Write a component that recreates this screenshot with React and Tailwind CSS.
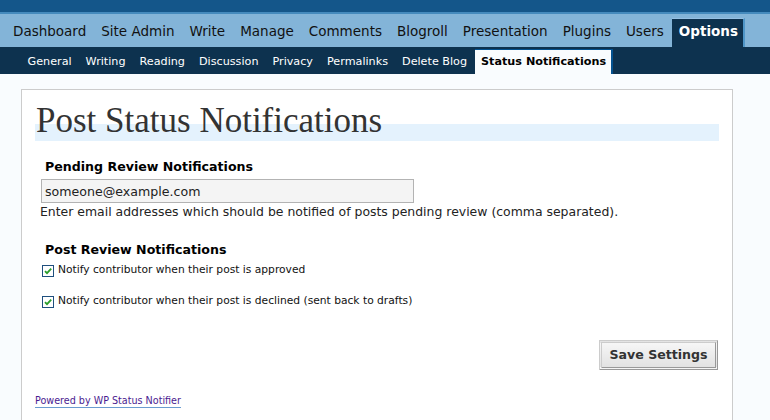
import React from 'react';

const menu = ['Dashboard', 'Site Admin', 'Write', 'Manage', 'Comments', 'Blogroll', 'Presentation', 'Plugins', 'Users', 'Options'];
const submenu = ['General', 'Writing', 'Reading', 'Discussion', 'Privacy', 'Permalinks', 'Delete Blog', 'Status Notifications'];

function Check() {
  return (
    <svg width="12" height="12" viewBox="0 0 12 12" className="shrink-0">
      <rect x="0.5" y="0.5" width="11" height="11" fill="#fff" stroke="#1f4f7e" />
      <path d="M3 6.2 L5 8.2 L9.2 3.6" fill="none" stroke="#2a9d2a" strokeWidth="1.8" />
    </svg>
  );
}

export default function App() {
  return (
    <div className="min-h-screen bg-[#f9fcfe] font-['DejaVu_Sans',sans-serif]">
      {/* Header */}
      <div className="h-3 bg-[#14568a]" />

      {/* Main menu */}
      <ul className="flex h-[35px] items-end gap-px border-t-2 border-[#448abd] bg-[#83b4d8] pl-[6px]">
        {menu.map((item) =>
          item === 'Options' ? (
            <li
              key={item}
              className="h-[29px] border-t border-r-2 border-t-[#96c0e3] border-r-[#4f96c8] bg-[#0d324f] pl-[7px] pr-[5px] pb-[4px] text-[13.5px] font-bold leading-[24px] text-white"
            >
              {item}
            </li>
          ) : (
            <li
              key={item}
              className="h-[29px] border-t border-transparent px-[7px] pb-[4px] text-[13.5px] leading-[24px] text-[#111]"
            >
              {item}
            </li>
          )
        )}
      </ul>

      {/* Sub menu */}
      <ul className="flex h-[27px] items-end gap-px bg-[#0d324f] pl-[21px]">
        {submenu.map((item) =>
          item === 'Status Notifications' ? (
            <li
              key={item}
              className="h-[25px] border-t border-r-2 border-[#045290] bg-[#f9fcfe] pl-[6.5px] pr-[5px] text-[11.2px] font-bold leading-[24px] text-black"
            >
              {item}
            </li>
          ) : (
            <li key={item} className="h-[25px] border-t border-transparent px-[6.5px] text-[11.2px] leading-[24px] text-white">
              {item}
            </li>
          )
        )}
      </ul>

      {/* Content card */}
      <div className="mt-[15px] ml-[21px] w-[712px] border border-[#ccc] bg-white px-[13px] pt-[11px] pb-[12px]">
        <h2 className="h-[40px] bg-[linear-gradient(transparent_23px,#e4f2fd_23px)] pl-px font-['Liberation_Serif',serif] text-[35px] leading-[40px] text-[#333]">
          Post Status Notifications
        </h2>

        <h3 className="mt-[18px] pl-[10px] text-[12.6px] font-bold leading-4 text-black">Pending Review Notifications</h3>
        <input
          readOnly
          defaultValue="someone@example.com"
          className="mt-[4px] ml-[6px] block h-[24px] w-[373px] border border-[#b3b3b3] bg-[#f4f4f4] px-[3px] text-[12.6px] text-[#222] outline-none"
        />
        <p className="mt-px pl-[5px] text-[12.45px] leading-4 text-[#222]">
          Enter email addresses which should be notified of posts pending review (comma separated).
        </p>

        <h3 className="mt-[22px] pl-[10px] text-[12.6px] font-bold leading-4 text-black">Post Review Notifications</h3>
        <label className="mt-[7px] ml-[7px] flex items-start gap-[4px]">
          <Check />
          <span className="-mt-px text-[10.7px] leading-[12px] text-[#111]">Notify contributor when their post is approved</span>
        </label>
        <label className="mt-[19px] ml-[7px] flex items-start gap-[4px]">
          <Check />
          <span className="-mt-px text-[10.7px] leading-[12px] text-[#111]">
            Notify contributor when their post is declined (sent back to drafts)
          </span>
        </label>

        <div className="mt-[32px] flex justify-end pr-px">
          <button className="h-[30px] w-[119px] border-[3px] border-double border-[#999] border-t-[#ccc] border-l-[#ccc] bg-[linear-gradient(#f6f6f6,#e2e2e2)] text-[12.6px] font-bold text-[#333]">
            Save Settings
          </button>
        </div>

        <div className="mt-[17px]">
          <a href="#" className="inline-block border-b border-[#6a9bd0] text-[9.6px] leading-[12px] text-[#4b1b90]">
            Powered by WP Status Notifier
          </a>
        </div>
      </div>
    </div>
  );
}
